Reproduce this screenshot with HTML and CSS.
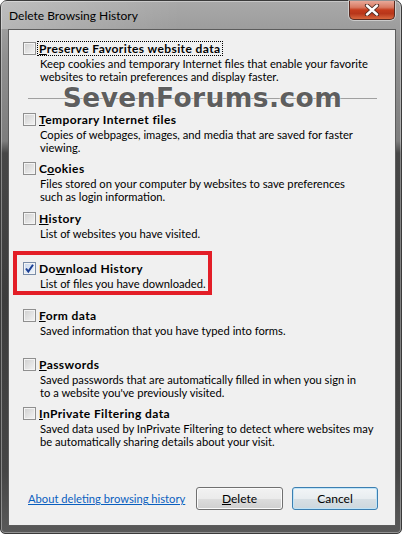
FILE: index.html
```html
<!DOCTYPE html>
<html lang="en">
<head>
    <meta charset="UTF-8">
    <meta name="viewport" content="width=device-width, initial-scale=1.0">
    <title>Delete Browsing History</title>
    <link rel="stylesheet" href="styles.css">
</head>
<body>
<div class="window">
    <div class="titlebar">
        <span class="title">Delete Browsing History</span>
        <div class="close">
            <svg width="16" height="12" viewBox="0 0 16 12">
                <path d="M3 1.5 L13 10.5 M13 1.5 L3 10.5" stroke="#4a2a22" stroke-width="4.2" stroke-linecap="round"/>
                <path d="M3 1.5 L13 10.5 M13 1.5 L3 10.5" stroke="#ffffff" stroke-width="2.4" stroke-linecap="round"/>
            </svg>
        </div>
    </div>
    <div class="panel">
        <div class="options">
            <div class="item">
                <span class="box"></span>
                <span class="label focused"><u>P</u>reserve Favorites website data</span>
                <div class="desc">Keep cookies and temporary Internet files that enable your favorite<br>websites to retain preferences and display faster.</div>
            </div>
            <div class="watermark"><span>SevenForums.com</span></div>
            <div class="item">
                <span class="box"></span>
                <span class="label"><u>T</u>emporary Internet files</span>
                <div class="desc">Copies of webpages, images, and media that are saved for faster<br>viewing.</div>
            </div>
            <div class="item tall">
                <span class="box"></span>
                <span class="label">C<u>o</u>okies</span>
                <div class="desc">Files stored on your computer by websites to save preferences<br>such as login information.</div>
            </div>
            <div class="item tall">
                <span class="box"></span>
                <span class="label"><u>H</u>istory</span>
                <div class="desc">List of websites you have visited.</div>
            </div>
            <div class="item short">
                <div class="highlight"></div>
                <span class="box checked">
                    <svg width="11" height="11" viewBox="0 0 11 11">
                        <path d="M2 5.5 L4.3 8.5 L9 1.8" fill="none" stroke="#1c3f94" stroke-width="2"/>
                    </svg>
                </span>
                <span class="label">Do<u>w</u>nload History</span>
                <div class="desc">List of files you have downloaded.</div>
            </div>
            <div class="item">
                <span class="box"></span>
                <span class="label"><u>F</u>orm data</span>
                <div class="desc">Saved information that you have typed into forms.</div>
            </div>
            <div class="item">
                <span class="box"></span>
                <span class="label"><u>P</u>asswords</span>
                <div class="desc">Saved passwords that are automatically filled in when you sign in<br>to a website you've previously visited.</div>
            </div>
            <div class="item">
                <span class="box"></span>
                <span class="label"><u>I</u>nPrivate Filtering data</span>
                <div class="desc">Saved data used by InPrivate Filtering to detect where websites may<br>be automatically sharing details about your visit.</div>
            </div>
        </div>
        <div class="footer">
            <a href="#" class="help">About deleting browsing history</a>
            <div class="buttons">
                <button class="btn"><u>D</u>elete</button>
                <button class="btn default">Cancel</button>
            </div>
        </div>
    </div>
</div>
</body>
</html>
```

FILE: styles.css
```css
body {
    margin: 0;
    background-color: #ffffff;
    font-family: Lato, "Open Sans", sans-serif;
    font-size: 11.2px;
    color: #000000;
}
.window {
    width: 402px;
    height: 534px;
    box-sizing: border-box;
    display: flex;
    flex-direction: column;
    border: 1px solid #3a3a3a;
    border-radius: 7px 7px 5px 5px;
    box-shadow: inset 0 0 0 1px rgba(255, 255, 255, 0.35);
    background: linear-gradient(180deg, #a9a9a9 0px, #8f8f8f 60px, #7d7d7d 140px, #474747 152px, #3c3c3c 300px, #454545 470px, #5a5a5a 534px);
}
.titlebar {
    height: 28px;
    display: flex;
    align-items: flex-start;
    justify-content: space-between;
    background: linear-gradient(90deg, rgba(255, 255, 255, 0.25), rgba(255, 255, 255, 0) 45%);
}
.title {
    margin: 7px 0 0 8px;
    font-size: 12px;
    line-height: 15px;
}
.close {
    width: 44px;
    height: 18px;
    margin-right: 6px;
    display: flex;
    justify-content: center;
    align-items: center;
    border: 1px solid #5a2a20;
    border-top: none;
    border-radius: 0 0 5px 5px;
    box-shadow: 0 0 0 1px rgba(255, 255, 255, 0.45);
    background: linear-gradient(180deg, #e8a898 0%, #d87a62 35%, #c43b1c 50%, #b8361a 70%, #d8683e 100%);
}
.panel {
    flex: 1;
    margin: 0 5px 7px 7px;
    display: flex;
    flex-direction: column;
    background-color: #f0f0f0;
    border: 1px solid #5c5c5c;
}
.options {
    padding: 11px 0 0 14px;
}
.item {
    position: relative;
    display: grid;
    grid-template-columns: 13px 1fr;
    column-gap: 1px;
    align-content: start;
    height: 49px;
}
.item.tall {
    height: 50px;
}
.item.short {
    height: 47px;
}
.box {
    width: 13px;
    height: 13px;
    margin-top: 1px;
    box-sizing: border-box;
    border: 1px solid #8f8f8f;
    box-shadow: inset 0 0 0 1px #f4f4f4;
    background: linear-gradient(135deg, #cfcfcf, #f4f4f4);
    display: flex;
    justify-content: center;
    align-items: center;
}
.box.checked {
    border-color: #7a8da8;
    background: linear-gradient(135deg, #c8d8ee, #f2f6fb);
}
.label {
    justify-self: start;
    font-size: 12px;
    font-weight: bold;
    letter-spacing: 0.4px;
    line-height: 13px;
    padding: 0 1px;
    border: 1px dotted transparent;
}
.label.focused {
    border-color: #000000;
}
.desc {
    grid-column: 2;
    margin: 1px 0 0 3px;
    line-height: 13px;
}
.watermark {
    height: 22px;
    margin: 0 18px 0 5px;
    position: relative;
    display: flex;
    justify-content: center;
}
.watermark:before {
    content: '';
    position: absolute;
    left: 0;
    right: 0;
    top: 8px;
    border-top: 1px solid #a0a0a0;
}
.watermark span {
    position: relative;
    margin-top: -4px;
    height: 24px;
    font-family: "DejaVu Sans", sans-serif;
    font-weight: bold;
    font-size: 26.5px;
    letter-spacing: 0.4px;
    line-height: 24px;
    color: #5e5e5e;
    text-shadow: 0 0 2px #ffffff, 0 0 1px #ffffff;
}
.highlight {
    position: absolute;
    left: -10px;
    top: -10px;
    width: 199px;
    height: 44px;
    box-sizing: border-box;
    border: 4px solid #e31e27;
}
.footer {
    margin-top: auto;
    padding: 0 17px 15px 19px;
    display: flex;
    align-items: center;
    justify-content: space-between;
}
.help {
    color: #0a5fbf;
    text-decoration: underline;
}
.buttons {
    display: flex;
    gap: 9px;
}
.btn {
    width: 87px;
    height: 23px;
    padding: 0;
    font-family: inherit;
    font-size: 12px;
    color: #000000;
    border: 1px solid #707070;
    border-radius: 3px;
    box-shadow: inset 0 0 0 1px #fbfbfb;
    background: linear-gradient(180deg, #f2f2f2 0%, #ebebeb 50%, #dddddd 51%, #cfcfcf 100%);
}
.btn.default {
    width: 86px;
    border-color: #3c7fb1;
    box-shadow: inset 0 0 0 1px #bfe4f8;
    background: linear-gradient(180deg, #f2f5f7 0%, #e8edf0 50%, #d8e0e5 51%, #cdd7dd 100%);
}
```
